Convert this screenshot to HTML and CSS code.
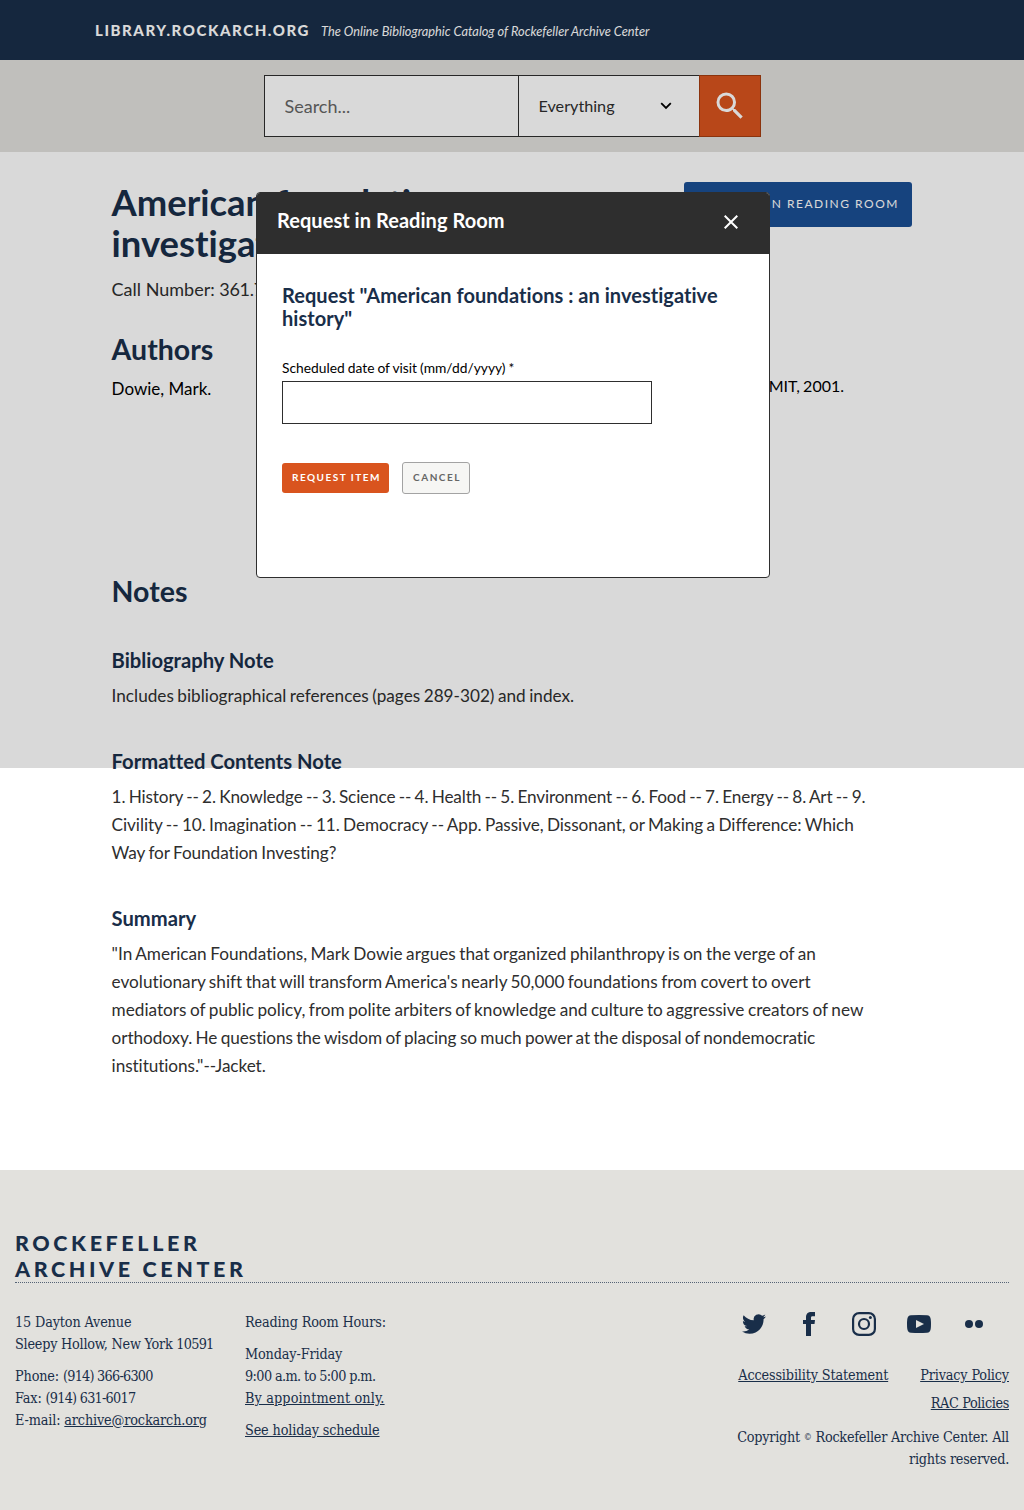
FILE: index.html
```html
<!DOCTYPE html>
<html lang="en">
<head>
<meta charset="utf-8">
<title>American foundations : an investigative history</title>
<link rel="stylesheet" href="styles.css">
</head>
<body>
<header class="header">
  <a class="header__brand">LIBRARY.ROCKARCH.ORG</a>
  <span class="header__tagline">The Online Bibliographic Catalog of Rockefeller Archive Center</span>
</header>
<form class="search">
  <input class="search__input" type="text" placeholder="Search..." aria-label="Search">
  <div class="search__select"><span>Everything</span>
    <svg width="12" height="8" viewBox="0 0 12 8"><path d="M1.2 1.2 6 6l4.800-4.800" fill="none" stroke="#000" stroke-width="1.800"/></svg>
  </div>
  <button class="search__button" type="button" aria-label="Submit search">
    <svg width="36" height="36" viewBox="0 0 24 24" fill="#fff"><path d="M15.500 14h-.79l-.28-.27A6.471 6.471 0 0 0 16 9.500 6.500 6.500 0 1 0 9.500 16c1.610 0 3.090-.59 4.230-1.570l.27.28v.79l5 4.990L20.490 19l-4.990-5zm-6 0C7.010 14 5 11.990 5 9.500S7.010 5 9.500 5 14 7.010 14 9.500 11.990 14 9.500 14z"/></svg>
  </button>
</form>
<main class="record">
  <div class="record__top">
    <div>
      <h1 class="record__title">American foundations : an investigative history</h1>
      <p class="record__call">Call Number: <span class="record__digits">361.7</span></p>
    </div>
    <button class="record__request" type="button">REQUEST IN READING ROOM</button>
  </div>
  <div class="record__details">
    <section>
      <h2 class="record__heading">Authors</h2>
      <p class="record__author">Dowie, Mark.</p>
    </section>
    <p class="record__imprint">Cambridge, Mass. : MIT, 2001.</p>
  </div>
  <section class="notes">
    <h2 class="record__heading">Notes</h2>
    <h3 class="notes__heading">Bibliography Note</h3>
    <p class="notes__text">Includes bibliographical references (pages 289-302) and index.</p>
    <h3 class="notes__heading">Formatted Contents Note</h3>
    <p class="notes__text notes__text--contents"><span class="notes__list">1. History -- 2. Knowledge -- 3. Science -- 4. Health -- 5. Environment -- 6. Food -- 7. Energy -- 8. Art -- 9.</span><br>Civility -- 10. Imagination -- 11. Democracy -- App. Passive, Dissonant, or Making a Difference: Which<br>Way for Foundation Investing?</p>
    <h3 class="notes__heading">Summary</h3>
    <p class="notes__text">"In American Foundations, Mark Dowie argues that organized philanthropy is on the verge of an<br>evolutionary shift that will transform America's nearly 50,000 foundations from covert to overt<br>mediators of public policy, from polite arbiters of knowledge and culture to aggressive creators of new<br><span class="notes__tight">orthodoxy. He questions the wisdom of placing so much power at the disposal of nondemocratic<br>institutions."--Jacket.</span></p>
  </section>
</main>
<footer class="footer">
  <div class="footer__title">ROCKEFELLER<br>ARCHIVE CENTER</div>
  <div class="footer__columns">
    <div class="footer__address">
      <p>15 Dayton Avenue<br><span class="footer__city">Sleepy Hollow, New York <span class="footer__digits">10591</span></span></p>
      <p>Phone: <span class="footer__digits">(914) 366-6300</span><br>Fax: <span class="footer__digits">(914) 631-6017</span><br>E-mail: <a>archive@rockarch.org</a></p>
    </div>
    <div class="footer__hours">
      <p>Reading Room Hours:</p>
      <p>Monday-Friday<br><span class="footer__time">9:00 a.m. to 5:00 p.m.</span><br><a class="footer__appointment">By appointment only.</a></p>
      <p><a>See holiday schedule</a></p>
    </div>
    <div class="footer__right">
      <div class="social">
        <svg viewBox="0 0 24 24"><path d="M23.950 4.570a10 10 0 0 1-2.820.77 4.960 4.960 0 0 0 2.160-2.720c-.95.56-2 .96-3.130 1.190a4.920 4.920 0 0 0-8.380 4.480C7.690 8.090 4.070 6.130 1.640 3.160a4.820 4.820 0 0 0-.67 2.470c0 1.710.87 3.210 2.190 4.100a4.900 4.900 0 0 1-2.230-.62v.06a4.920 4.920 0 0 0 3.950 4.830 5 5 0 0 1-2.210.08 4.940 4.940 0 0 0 4.600 3.420A9.870 9.870 0 0 1 0 19.540a13.990 13.990 0 0 0 7.560 2.210c9.050 0 14-7.500 14-13.980 0-.21 0-.42-.02-.63a9.940 9.940 0 0 0 2.410-2.570z"/></svg>
        <svg viewBox="0 0 24 24"><path d="M9 24V12H6V8h3V5.500C9 1.800 10.800 0 14.500 0H18v4.200h-2.300c-1.400 0-1.700.6-1.700 1.800v2h4l-.5 4H14v12z"/></svg>
        <svg viewBox="0 0 24 24"><g fill="none" stroke="#192e49" stroke-width="2.200"><rect x="1.100" y="1.100" width="21.800" height="21.800" rx="6"/><circle cx="12" cy="12" r="5"/></g><circle cx="18.400" cy="5.600" r="1.500"/></svg>
        <svg viewBox="0 0 24 24"><path fill-rule="evenodd" d="M4 3.300q8-.6 16 0 3.200.2 3.700 3.700.6 5 0 10-.5 3.500-3.700 3.700-8 .6-16 0Q.8 20.500.3 17q-.6-5 0-10Q.8 3.500 4 3.300zM9 8v8l8-4z"/></svg>
        <svg viewBox="0 0 24 24"><circle cx="7" cy="12" r="4"/><circle cx="17" cy="12" r="4"/></svg>
      </div>
      <nav class="footer__links"><a class="footer__accessibility">Accessibility Statement</a><a>Privacy Policy</a><a class="footer__policies">RAC Policies</a></nav>
      <p class="footer__copyright">Copyright <span class="footer__mark">©</span> Rockefeller Archive Center. All<br>rights reserved.</p>
    </div>
  </div>
</footer>
<div class="overlay"></div>
<div class="modal" role="dialog">
  <div class="modal__header"><h2 class="modal__title">Request in Reading Room</h2>
    <svg width="14" height="14" viewBox="0 0 14 14"><path d="M.7.7l12.600 12.600M13.300.7.7 13.300" stroke="#fff" stroke-width="2"/></svg>
  </div>
  <div class="modal__body">
    <h3 class="modal__heading">Request "American foundations : an investigative history"</h3>
    <label class="modal__label" for="visit">Scheduled date of visit (mm/dd/yyyy) *</label>
    <input class="modal__input" id="visit" type="text">
    <div class="modal__actions"><button class="btn btn--primary" type="button">REQUEST ITEM</button><button class="btn btn--cancel" type="button">CANCEL</button></div>
  </div>
</div>
</body>
</html>
```
FILE: styles.css
```css
* { box-sizing: border-box; }
body { margin: 0; background: #fff; color: #2e2e2e; font-family: Lato, sans-serif; font-variant-ligatures: none; }
h1, h2, h3, p { margin: 0; }
h1, h2, h3 { color: #192e49; font-weight: 700; line-height: 1.15; }
button, input { font-family: inherit; margin: 0; }
svg { display: block; }

.header { height: 60px; padding: 0 95px; background: #192e49; color: #fff; display: flex; align-items: center; gap: 11px; }
.header__brand { font-size: 15px; font-weight: 900; letter-spacing: 1.570px; white-space: nowrap; }
.header__tagline { font-size: 12.800px; font-style: italic; padding-top: 2px; white-space: nowrap; }

.search { height: 92px; background: #e2e1dd; display: flex; justify-content: center; padding: 15px 0; }
.search__input { width: 255px; border: 1px solid #2e2e2e; border-right: 0; border-radius: 0; background: #fff; padding: 0 20px; font-size: 18px; }
.search__input::placeholder { color: #666; opacity: 1; }
.search__select { width: 181px; border: 1px solid #2e2e2e; border-right: 0; margin-left: -1px; background: #fff; padding: 0 27px 0 20px; font-size: 16.200px; display: flex; align-items: center; justify-content: space-between; }
.search__select span { padding-bottom: 2px; }
.search__button { width: 62px; border: 1px solid #a43c10; background: #d9541e; padding: 0 0 0 12px; }

.record { height: 1018px; padding: 30px 112px 0 111.600px; }
.record__top { display: flex; justify-content: space-between; align-items: flex-start; height: 151px; }
.record__top > div { width: 500px; }
.record__title { font-size: 36.400px; line-height: 41.400px; }
.record__call { font-size: 18px; line-height: 28px; margin-top: 10px; }
.record__digits { letter-spacing: -.3px; }
.record__request { width: 228px; height: 45px; border: 0; border-radius: 3px; background: #1b4f95; color: #fff; font-size: 12px; letter-spacing: 1.500px; padding: 0 15px 2px; text-align: right; white-space: nowrap; }
.record__details { display: flex; justify-content: space-between; height: 242px; color: #000; }
.record__heading { font-size: 28.500px; line-height: 32.200px; }
.record__author { font-size: 17px; line-height: 28px; margin-top: 10px; }
.record__imprint { font-size: 16px; line-height: 24px; padding: 41px 68px 0 0; word-spacing: -1px; }
.notes__heading { font-size: 20.200px; line-height: 23px; margin-top: 42px; }
.notes__text { font-size: 17.200px; line-height: 28px; margin-top: 10px; word-spacing: -.9px; white-space: nowrap; }
.notes__text--contents { letter-spacing: -.070px; }
.notes__list { letter-spacing: -.140px; }
.notes__tight { letter-spacing: -.080px; }
.notes__text + .notes__heading { margin-top: 40px; }

.footer { height: 340px; background: #e2e1dd; color: #192e49; padding: 60px 15px 0; font-family: "DejaVu Serif Condensed", "DejaVu Serif", serif; font-stretch: condensed; font-size: 14.300px; line-height: 22px; letter-spacing: -.15px; }
.footer a { text-decoration: underline; }
.footer__title { height: 53px; border-bottom: 1px dotted rgba(25, 46, 73, .7); font-family: Lato, sans-serif; font-size: 21.500px; font-weight: 900; line-height: 26px; letter-spacing: 3.600px; }
.footer__columns { display: flex; padding-top: 28px; white-space: nowrap; }
.footer__columns p + p { margin-top: 10px; }
.footer__address { width: 230px; }
.footer__hours { width: 200px; }
.footer__city { letter-spacing: -.24px; }
.footer__digits { letter-spacing: -.75px; }
.footer__time { letter-spacing: -.6px; }
.footer__appointment { letter-spacing: .120px; }
.footer__policies { letter-spacing: -.35px; }
.footer__right { margin: 1px 0 0 auto; width: 275px; text-align: right; }
.social { display: flex; justify-content: space-between; width: 244px; margin-left: 8px; }
.social svg { width: 24px; height: 24px; fill: #192e49; }
.footer__links { display: flex; flex-wrap: wrap; justify-content: flex-end; margin: 25px 0 0 -20px; line-height: 28px; }
.footer__accessibility { margin-right: 32px; }
.footer__copyright { margin-top: 9px; letter-spacing: -.25px; }
.footer__mark { font-size: 9px; vertical-align: 2px; line-height: 1; }

.overlay { position: absolute; top: 0; left: 0; width: 100%; height: 768px; background: rgba(0, 0, 0, .15); }
.modal { position: absolute; top: 192px; left: 256px; width: 514px; height: 386px; border: 1px solid #2e2e2e; border-radius: 4px; background: #fff; overflow: hidden; }
.modal__header { height: 61px; background: #2e2e2e; display: flex; justify-content: space-between; padding: 16px 31px 0 20px; }
.modal__header svg { margin-top: 6px; }
.modal__title { color: #fff; font-size: 20px; letter-spacing: .040px; }
.modal__body { padding: 30px 25px; }
.modal__label { display: block; margin-top: 29px; color: #000; font-size: 13.800px; line-height: 17px; word-spacing: -.5px; }
.modal__heading { font-size: 20px; letter-spacing: .040px; }
.modal__input { display: block; width: 370px; height: 43px; margin-top: 5px; border: 1px solid #2e2e2e; border-radius: 0; background: #fff; }
.modal__actions { display: flex; align-items: center; gap: 13px; margin-top: 38px; }
.btn { border-radius: 3px; font-size: 10px; font-weight: 700; letter-spacing: 1.500px; padding: 0 0 2px 2px; white-space: nowrap; }
.btn--primary { width: 107px; height: 30px; border: 0; background: #d9541e; color: #fff; }
.btn--cancel { width: 68px; height: 32px; border: 1px solid #a3a3a3; background: #f6f6f4; color: #666; }
```
